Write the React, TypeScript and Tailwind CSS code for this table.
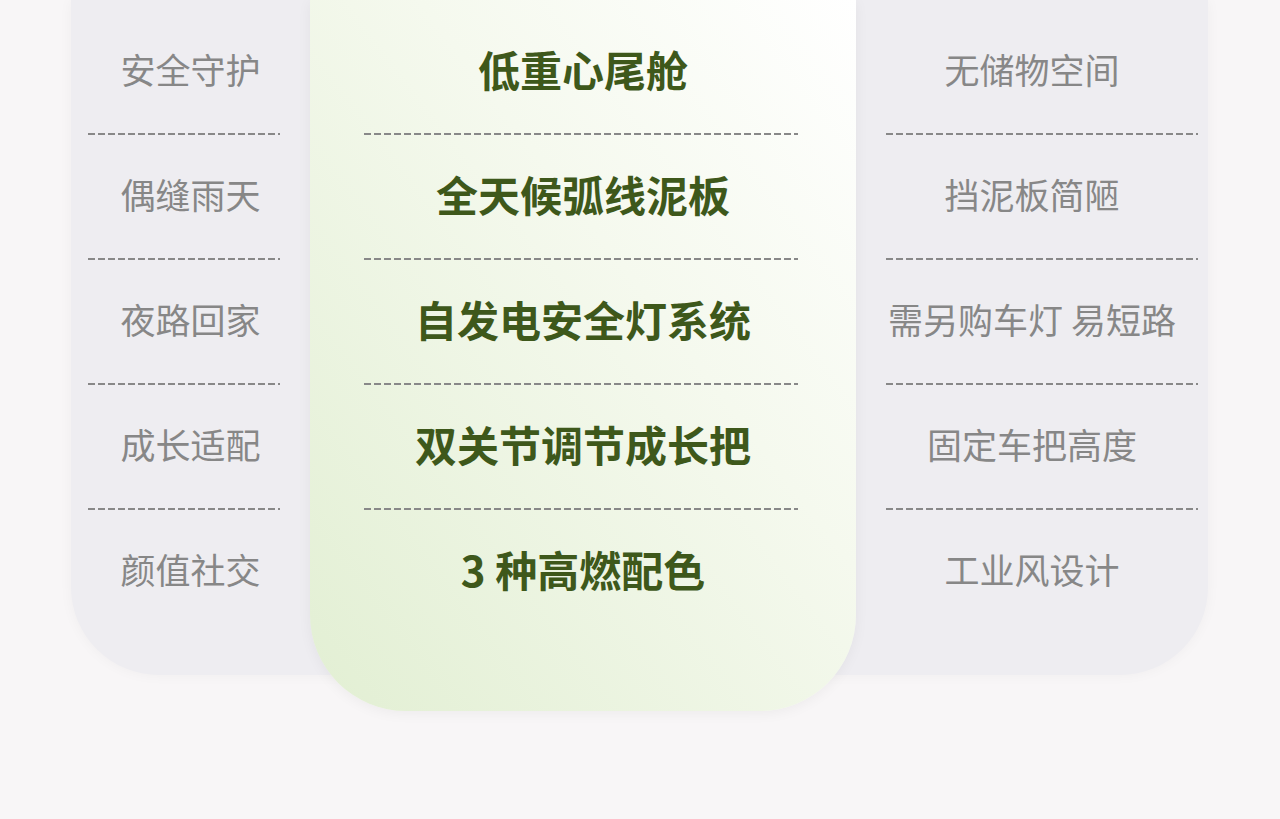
import React from "react";

const left = ["安全守护", "偶缝雨天", "夜路回家", "成长适配", "颜值社交"];
const center = ["低重心尾舱", "全天候弧线泥板", "自发电安全灯系统", "双关节调节成长把", "3 种高燃配色"];
const right = ["无储物空间", "挡泥板简陋", "需另购车灯 易短路", "固定车把高度", "工业风设计"];

const dash = "h-[2px] bg-[repeating-linear-gradient(90deg,#888888_0px,#888888_7px,transparent_7px,transparent_10px)]";

export default function App() {
  return (
    <div
      className="min-h-[819px] w-full bg-[#f8f6f7] overflow-hidden"
      style={{ fontFamily: '"Noto Sans CJK SC", "Noto Sans", sans-serif' }}
    >
      <div className="ml-[71px] w-[1137px] h-[675px] flex items-start bg-[#eeedf1] rounded-b-[88px] shadow-[0_0_14px_rgba(0,0,0,0.04)]">
        {/* left column */}
        <div className="w-[239px] pt-[10px] flex flex-col">
          {left.map((t, i) => (
            <div key={t} className="h-[125px] flex flex-col">
              <div className="flex-1 pb-[6px] flex items-center justify-center text-[35px] leading-none text-[#878787]">
                {t}
              </div>
              <div className={`h-[2px] ml-[17px] mr-[30px] ${i < 4 ? dash : ""}`} />
            </div>
          ))}
        </div>
        {/* center card */}
        <div className="w-[546px] h-[711px] pt-[10px] flex flex-col rounded-b-[96px] bg-[linear-gradient(to_bottom_left,#ffffff_0%,#f5f9ee_40%,#e2efd3_100%)] shadow-[0_2px_14px_rgba(0,0,0,0.05)]">
          {center.map((t, i) => (
            <div key={t} className="h-[125px] flex flex-col">
              <div className="flex-1 pb-[6px] flex items-center justify-center text-[42px] leading-none font-bold text-[#3e581b]">
                {t}
              </div>
              <div className={`h-[2px] ml-[54px] mr-[58px] ${i < 4 ? dash : ""}`} />
            </div>
          ))}
        </div>
        {/* right column */}
        <div className="flex-1 pt-[10px] flex flex-col">
          {right.map((t, i) => (
            <div key={t} className="h-[125px] flex flex-col">
              <div className="flex-1 pb-[6px] flex items-center justify-center text-[35px] leading-none text-[#878787] whitespace-pre">
                {t}
              </div>
              <div className={`h-[2px] ml-[30px] mr-[10px] ${i < 4 ? dash : ""}`} />
            </div>
          ))}
        </div>
      </div>
    </div>
  );
}
